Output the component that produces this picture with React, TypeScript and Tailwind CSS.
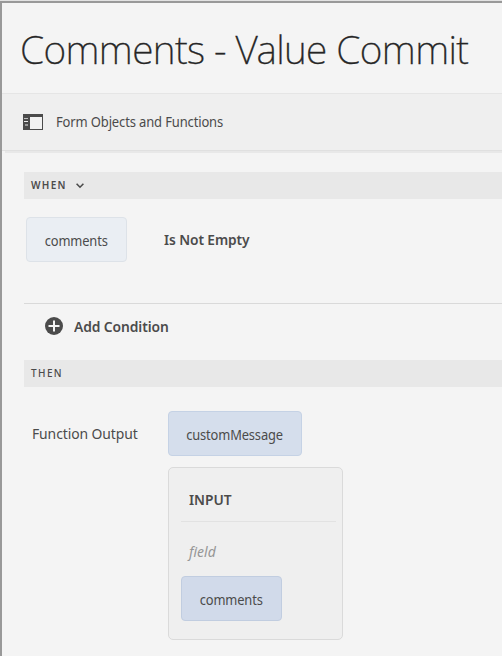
import React from "react";

function Chip({ label, className }: { label: string; className: string }) {
  return (
    <div className={`flex h-[45px] items-center justify-center rounded-[4px] border pt-[3px] text-[14px] leading-none text-[#4b4b4b] ${className}`}>
      <span className="scale-x-[0.92] tracking-[-0.15px]">{label}</span>
    </div>
  );
}

function PanelIcon() {
  return (
    <svg width="20" height="16" viewBox="0 0 20 16" shapeRendering="crispEdges">
      <path fill="#4b4b4b" d="M0 0h20v16H0z" />
      <path fill="#f2f2f2" d="M7 3h12v12H7z" />
      <path fill="#c0c0c0" d="M2 4h3v1H2zM1 4h1v1H1z" />
      <path fill="#eeeeee" d="M1 7h4v1H1z" />
      <path fill="#9a9a9a" d="M2 10h3v2H2z" />
    </svg>
  );
}

export default function App() {
  return (
    <div className="h-[656px] w-[502px] overflow-hidden border-t border-[#e2e2e2] bg-[#f4f4f4] font-['Noto_Sans','Open_Sans',sans-serif] text-[#4b4b4b]">
      <div className="h-[655px] border-t-2 border-l-2 border-[#999]">
        <header className="flex h-[90px] items-center pl-[18px]">
          <h1 className="whitespace-nowrap pt-[1px] text-[39px] leading-none font-extralight tracking-[-0.6px] text-[#252525] [-webkit-text-stroke:0.35px_#252525]">
            Comments - Value Commit
          </h1>
        </header>
        <div className="flex h-[58px] items-center border-t border-b border-t-[#e5e5e5] border-b-[#e0e0e0] bg-[#efefef] pl-[21px]">
          <PanelIcon />
          <span className="ml-[13px] origin-left scale-x-[0.928] pb-px text-[14px] tracking-[-0.15px]">Form Objects and Functions</span>
        </div>
        <div className="ml-[3px] h-[2px] bg-[#e8e8e8]" />
        <main className="pt-[19px] pl-[22px]">
          <div className="flex h-[27px] items-center bg-[#e8e8e8] pl-[7px] text-[10px] font-semibold tracking-[1.3px]">
            WHEN
            <svg className="mt-px ml-[9px]" width="8" height="6" viewBox="0 0 8 6" fill="none" stroke="#4b4b4b" strokeWidth="1.6">
              <path d="M.6.8 4 4.2 7.4.8" />
            </svg>
          </div>
          <div className="flex h-[105px] items-start border-b border-[#d9d9d9] pt-[18px] pl-[2px]">
            <Chip label="comments" className="w-[101px] border-[#dde2e8] bg-[#eaeef3]" />
            <span className="mt-[11px] ml-[37px] origin-left scale-x-[0.917] text-[15px] leading-[22px] font-semibold tracking-[-0.1px]">Is Not Empty</span>
          </div>
          <div className="flex h-[56px] items-center pb-[12px] pl-[21px]">
            <svg width="18" height="18" viewBox="0 0 18 18">
              <circle cx="9" cy="9" r="9" fill="#4b4b4b" />
              <path d="M9 3.5v11M3.5 9h11" stroke="#f4f4f4" strokeWidth="2" />
            </svg>
            <span className="ml-[11px] origin-left scale-x-[0.922] text-[15px] leading-[22px] font-semibold tracking-[-0.1px]">Add Condition</span>
          </div>
          <div className="flex h-[27px] items-center bg-[#e8e8e8] pl-[7px] text-[10px] font-medium tracking-[1.4px]">THEN</div>
          <div className="flex items-start pt-[24px] pl-[8px]">
            <span className="w-[136px] pt-[11px] text-[15px] leading-[22px] tracking-[-0.1px]">
              <span className="inline-block origin-left scale-x-[0.927]">Function Output</span>
            </span>
            <div>
              <Chip label="customMessage" className="w-[134px] border-[#c5d2e5] bg-[#d5deec]" />
              <section className="mt-[11px] h-[173px] w-[175px] rounded-[5px] border border-[#dadada] bg-[#efefef] pt-[20px] pl-[12px]">
                <h2 className="h-[34px] w-[155px] border-b border-[#e2e2e2] pl-[8px] text-[15px] leading-[22px] font-semibold">
                  <span className="inline-block origin-left scale-x-[0.92]">INPUT</span>
                </h2>
                <div className="mt-[19px] mb-[13px] pl-[8px] text-[14px] leading-[22px] text-[#969696] italic">field</div>
                <Chip label="comments" className="w-[101px] border-[#c1cde0] bg-[#d1daea]" />
              </section>
            </div>
          </div>
        </main>
      </div>
    </div>
  );
}
